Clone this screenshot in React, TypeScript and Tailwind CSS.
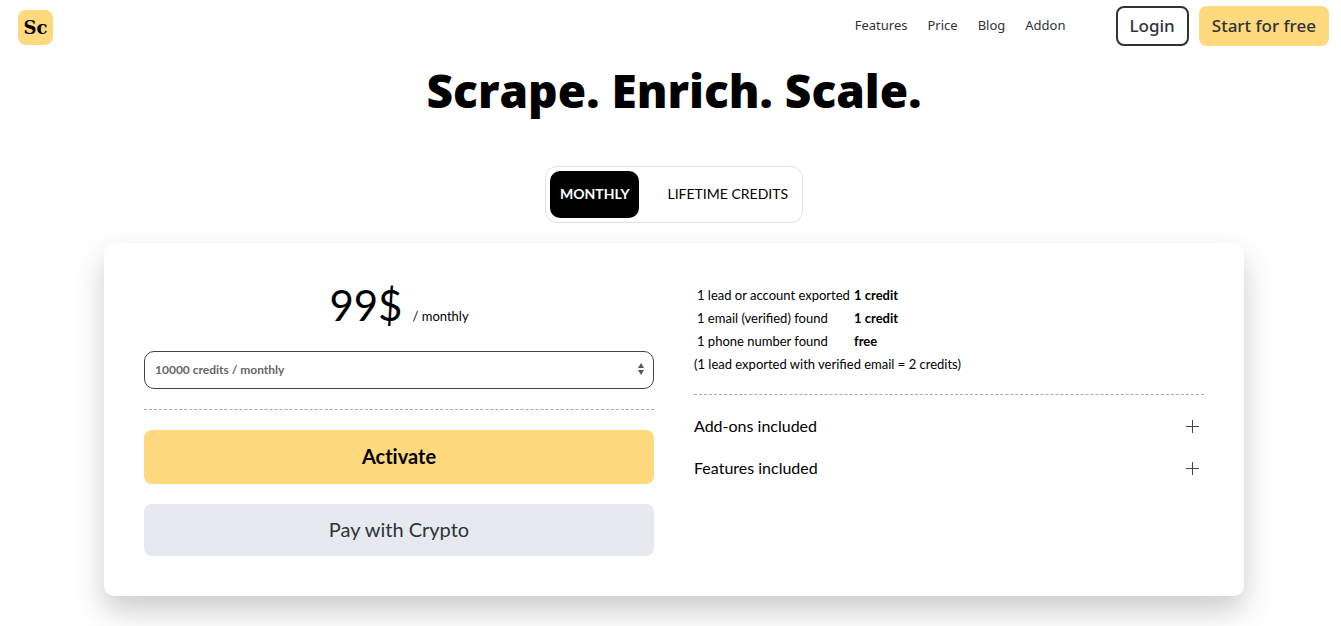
import React, { useState } from 'react';

type Plan = 'monthly' | 'lifetime';

const NAV_LINKS = ['Features', 'Price', 'Blog', 'Addon'];

const CREDIT_COSTS = [
  { label: '1 lead or account exported', cost: '1 credit' },
  { label: '1 email (verified) found', cost: '1 credit' },
  { label: '1 phone number found', cost: 'free' },
];

const Header: React.FC = () => (
  <header className="flex h-[52px] items-start justify-between pt-1.5 pr-3 pl-[18px] font-['Noto_Sans',sans-serif] text-[#2f3337]">
    <a
      href="#"
      className="mt-1 flex h-[35px] w-[35px] items-center justify-center rounded-lg bg-[#ffd97d] font-['DejaVu_Serif',serif] text-lg font-bold text-black"
    >
      Sc
    </a>
    <div className="flex items-center">
      <nav className="mr-[50px] flex gap-5 text-[13px]">
        {NAV_LINKS.map((link) => (
          <a key={link} href="#">
            {link}
          </a>
        ))}
      </nav>
      <div className="flex gap-2.5 text-[17px] font-medium">
        <button className="h-10 rounded-lg border-2 border-[#2f3337] px-3">Login</button>
        <button className="h-10 rounded-lg bg-[#ffd97d] px-[13px]">Start for free</button>
      </div>
    </div>
  </header>
);

const PlanToggle: React.FC<{ plan: Plan; onChange: (plan: Plan) => void }> = ({ plan, onChange }) => {
  const style = (p: Plan) =>
    plan === p ? 'rounded-[10px] bg-black px-2.5 pb-0.5 font-bold text-white' : 'px-2.5 pb-0.5 text-black';

  return (
    <div className="mx-auto flex h-[57px] w-fit gap-[18px] rounded-xl border border-[#dee2e6] p-1 text-sm">
      <button className={style('monthly')} onClick={() => onChange('monthly')}>
        MONTHLY
      </button>
      <button className={style('lifetime')} onClick={() => onChange('lifetime')}>
        LIFETIME CREDITS
      </button>
    </div>
  );
};

const Expandable: React.FC<{ title: string }> = ({ title }) => {
  const [open, setOpen] = useState(false);

  return (
    <button
      aria-expanded={open}
      onClick={() => setOpen(!open)}
      className="flex h-[42px] w-full items-center justify-between pr-[5px] text-base"
    >
      {title}
      <svg width="13" height="13" viewBox="0 0 13 13" stroke="#444" strokeWidth="1">
        <path d={open ? 'M0 6.5h13' : 'M0 6.5h13M6.5 0v13'} />
      </svg>
    </button>
  );
};

const App: React.FC = () => {
  const [plan, setPlan] = useState<Plan>('monthly');

  return (
    <div className="min-h-screen overflow-hidden bg-white font-['Lato',sans-serif] text-black">
      <Header />
      <main className="pl-[7px]">
        <h1 className="pt-2 text-center font-['Open_Sans',sans-serif] text-[46px] leading-[60px] font-extrabold">
          Scrape. Enrich. Scale.
        </h1>
        <div className="mt-[46px]">
          <PlanToggle plan={plan} onChange={setPlan} />
        </div>

        <section className="mx-auto mt-5 mb-[30px] grid max-w-[1140px] grid-cols-2 gap-10 rounded-[10px] bg-white p-10 shadow-[0_15px_30px_rgba(0,0,0,0.2)]">
          <div>
            <div className="flex h-12 items-baseline justify-center gap-2.5 text-[13px]">
              <span className="text-[42px] leading-[44px]">99$</span>
              <span>/ monthly</span>
            </div>
            <div className="relative mt-5">
              <select
                aria-label="Credits"
                className="block h-[38px] w-full appearance-none rounded-[10px] border border-[#444] bg-white px-2.5 text-xs font-bold text-[#666]"
              >
                <option>10000 credits / monthly</option>
              </select>
              <svg
                className="pointer-events-none absolute top-3 right-2.5"
                width="6"
                height="12"
                viewBox="0 0 6 12"
                fill="#555"
              >
                <path d="M3 0l3 5H0zM3 12L0 7h6z" />
              </svg>
            </div>
            <hr className="mt-5 border-dashed border-[#aaa]" />
            <button className="mt-5 block h-[54px] w-full rounded-lg bg-[#ffd97d] pb-0.5 text-xl font-bold [font-variant-ligatures:none]">
              Activate
            </button>
            <button className="mt-5 block h-[52px] w-full rounded-lg bg-[#e6eaf0] pb-0.5 text-xl text-[#2f3337]">
              Pay with Crypto
            </button>
          </div>

          <div>
            <table className="border-separate border-spacing-0.5 text-[13px] leading-[19px]">
              <tbody>
                {CREDIT_COSTS.map(({ label, cost }) => (
                  <tr key={label}>
                    <td className="min-w-[155px] p-px">{label}</td>
                    <td className="p-px font-bold">{cost}</td>
                  </tr>
                ))}
              </tbody>
            </table>
            <p className="text-[13px] leading-5">(1 lead exported with verified email = 2 credits)</p>
            <hr className="mt-5 mb-2.5 border-dashed border-[#aaa]" />
            <Expandable title="Add-ons included" />
            <Expandable title="Features included" />
          </div>
        </section>
      </main>
    </div>
  );
};

export default App;
